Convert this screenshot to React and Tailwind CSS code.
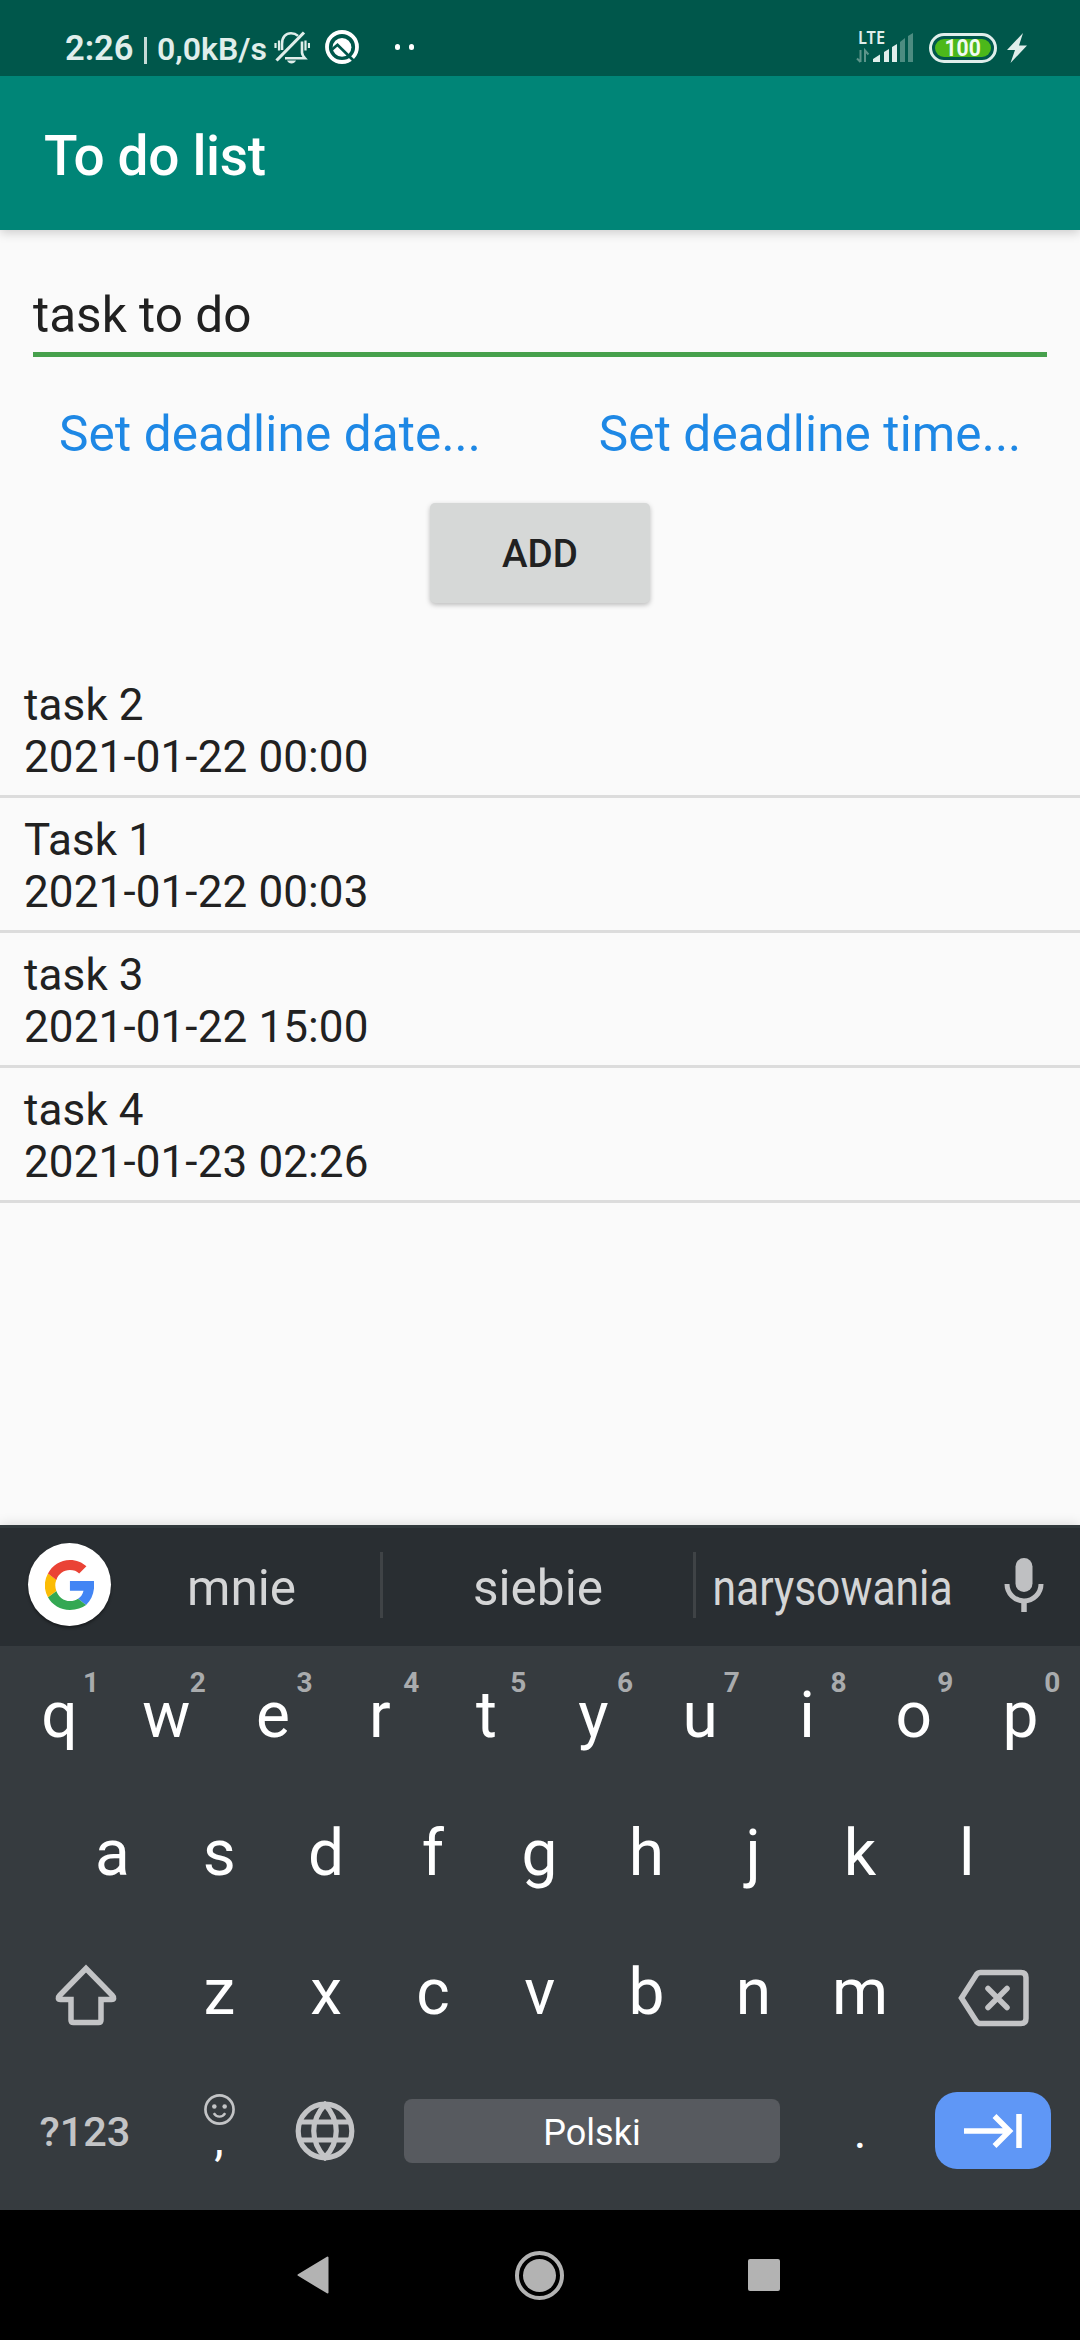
const tasks = [
  { name: 'task 2', due: '2021-01-22 00:00' },
  { name: 'Task 1', due: '2021-01-22 00:03' },
  { name: 'task 3', due: '2021-01-22 15:00' },
  { name: 'task 4', due: '2021-01-23 02:26' },
];

const BellOffIcon = () => (
  <svg className="h-[34px] w-[36px] shrink-0" viewBox="0 0 36 34" fill="none" stroke="#e0eeeb" strokeWidth="2.6">
    <path d="M8 20V14C8 6.500 12 3.300 17 3.300c3 0 5 .8 7 2.600M28 11.500v11c0 2 1 3.500 3 5.800H11" />
    <path d="M2.500 30.500 30 2.500" strokeWidth="3.200" />
    <path d="M5 10.500v10M1.500 13v5M31.500 10.500v10M35 13v5" strokeWidth="2.200" />
    <path d="M13 30.500h9c-1 2-2.500 3-4.500 3s-3.500-1-4.500-3Z" fill="#e0eeeb" stroke="none" />
  </svg>
);

const QIcon = () => (
  <svg className="h-[34px] w-[34px] shrink-0" viewBox="0 0 34 34" fill="none">
    <circle cx="17" cy="17" r="15" stroke="#fff" strokeWidth="3.800" />
    <circle cx="17" cy="17.300" r="9.400" fill="#fff" />
    <path d="M7 19.500 12.500 14.800 29 31" stroke="#00574b" strokeWidth="2.800" />
  </svg>
);

const SignalIcon = () => (
  <svg className="h-[34px] w-[60px] shrink-0 overflow-visible" viewBox="0 0 60 34">
    <text x="2" y="13.500" fontSize="17" fontWeight="600" fontFamily="'Noto Sans', sans-serif" fill="#e0eeeb" textLength="27" lengthAdjust="spacingAndGlyphs">LTE</text>
    <path d="M4.500 20v12M1 28.500l3.500 3.500M9 32V20.500l3.500 4" stroke="#5c948a" strokeWidth="2" fill="none" />
    <path d="M17 31.500V29l7-4.500V32h-7ZM28 22l5-3v13h-5ZM36 17l5-3v18h-5Z" fill="#e0eeeb" />
    <path d="M44 12l5-4v24h-5ZM52 6l5-3v29h-5Z" fill="#4d8c81" />
  </svg>
);

const BoltIcon = () => (
  <svg className="h-[30px] w-[20px] shrink-0" viewBox="0 0 20 30" fill="#e0eeeb">
    <path d="M16 0 0 17h8L3.500 30 20 12.500h-8L16 0Z" />
  </svg>
);

const GoogleG = () => (
  <svg className="h-[50px] w-[49px]" viewBox="3.600 2.700 16.900 17.300">
    <path fill="#4285f4" d="M20.500 10H12.200v3.300h4.700c-.3 1.200-.9 2.200-1.900 2.800l2.800 2.200c1.800-1.700 2.800-4.200 2.800-7 0-.5 0-.9-.1-1.300Z" />
    <path fill="#34a853" d="M12.200 20c2.300 0 4.200-.7 5.600-1.700L15 16.100c-.8.500-1.700.8-2.800.8-2.200 0-4-1.500-4.700-3.500l-2.900 2.200C6 18.200 8.900 20 12.200 20Z" />
    <path fill="#fbbc05" d="M7.500 13.400a5.500 5.500 0 0 1 0-3.900L4.600 7.400a8.700 8.700 0 0 0 0 8.200l2.900-2.200Z" />
    <path fill="#ea4335" d="M12.200 6.200c1.300 0 2.400.4 3.200 1.200l2.500-2.500c-1.500-1.400-3.400-2.200-5.700-2.200-3.300 0-6.200 1.900-7.600 4.700l2.900 2.200c.7-2 2.500-3.400 4.700-3.400Z" />
  </svg>
);

const MicIcon = () => (
  <svg className="h-[54px] w-[40px]" viewBox="0 0 40 54" fill="none">
    <rect x="11.500" y="0" width="17" height="34" rx="8.500" fill="#bfc0c2" />
    <path d="M3 26a17 17 0 0 0 34 0" stroke="#bfc0c2" strokeWidth="5" />
    <path d="M20 42v12" stroke="#bfc0c2" strokeWidth="5.500" />
  </svg>
);

const ShiftIcon = () => (
  <svg className="h-[62px] w-[62px]" viewBox="0 0 62 62" fill="none" stroke="#c3c4c6" strokeWidth="5.500">
    <path d="M31 4.500 4.600 31.500C2.500 33.600 3 35.500 5.500 35.500H16V56q0 2.500 2.500 2.500h25q2.500 0 2.500-2.500V35.500h10.500c2.500 0 3-1.900.9-4L31 4.500Z" />
  </svg>
);

const BackspaceIcon = () => (
  <svg className="h-[58px] w-[72px]" viewBox="0 0 72 58" fill="none" stroke="#c3c4c6" strokeWidth="5.500">
    <path d="M3.500 29 18.500 5.500Q20 3.500 22.500 3.500H63q5 0 5 5v41q0 5-5 5H22.500q-2.500 0-4-2L3.500 29Z" />
    <path d="M30 19.500 49 38.500M49 19.500 30 38.500" strokeLinecap="round" />
  </svg>
);

const SmileyIcon = () => (
  <svg className="h-[31px] w-[31px] shrink-0" viewBox="0 0 30 30" fill="none" stroke="#c3c4c6">
    <circle cx="15" cy="15" r="13.600" strokeWidth="2.600" />
    <circle cx="10" cy="12" r="2.200" fill="#c3c4c6" stroke="none" />
    <circle cx="20" cy="12" r="2.200" fill="#c3c4c6" stroke="none" />
    <path d="M9.500 18.500c2.500 4.500 8.500 4.500 11 0" strokeWidth="2.300" />
  </svg>
);

const GlobeIcon = () => (
  <svg className="h-[60px] w-[60px]" viewBox="0 0 60 60" fill="none" stroke="#c3c4c6" strokeWidth="5.200">
    <circle cx="30" cy="30" r="26.800" />
    <path d="M30 3.500C15 20 15 40 30 56.500C45 40 45 20 30 3.500ZM5 21h50M5 39h50" />
  </svg>
);

const TabIcon = () => (
  <svg className="h-[36px] w-[60px]" viewBox="0 0 60 36" fill="none" stroke="#fff" strokeWidth="5.500">
    <path d="M1 18h46M31.500 3 46.500 18l-15 15M56 1v34" />
  </svg>
);

const Key = ({ children, hint }) => (
  <div className="relative flex w-[106.800px] justify-center text-[64px] leading-[64px] text-white">
    {children}
    {hint && (
      <span className="absolute top-[-15px] left-[76px] w-[18px] text-center text-[28px] leading-[28px] font-bold text-[#a9abad]">{hint}</span>
    )}
  </div>
);

export default function App() {
  return (
    <div className="flex h-[2340px] w-[1080px] flex-col overflow-hidden bg-[#fafafa] font-['Roboto',sans-serif] text-[#212121]">
      <header className="relative z-10 shrink-0 bg-[#008577] shadow-[0_3px_10px_rgba(0,0,0,0.18)]">
        <div className="flex h-[76px] justify-between bg-[#00574b] pt-[30px] text-[#e0eeeb]">
          <div className="flex h-[34px] pl-[65px] font-semibold">
            <span className="w-[79px] text-[34.500px] leading-[37px] whitespace-nowrap">2:26</span>
            <span className="mt-[7px] h-[27px] w-[3px] bg-[#c5dbd7]" />
            <span className="ml-[10px] w-[117px] text-[32px] leading-[38px] whitespace-nowrap">0,0kB/s</span>
            <BellOffIcon />
            <div className="ml-[15px]"><QIcon /></div>
            <div className="ml-[36px] flex gap-[9px] pt-[14px]">
              <span className="h-[6px] w-[5px] rounded-full bg-white" />
              <span className="h-[6px] w-[5px] rounded-full bg-white" />
            </div>
          </div>
          <div className="flex h-[34px] pr-[53px]">
            <SignalIcon />
            <div className="mt-[3px] ml-[13px] h-[30px] w-[68px] rounded-full border-[3px] border-[#e0eeeb] p-[3px]">
              <div className="flex h-full items-center justify-center rounded-full bg-[#4cb81a] text-[24px] leading-[18px] font-bold text-[#f0faf0]"><span className="scale-x-[0.880]">100</span></div>
            </div>
            <div className="mt-[3px] ml-[10px]"><BoltIcon /></div>
          </div>
        </div>
        <div className="flex h-[154px] items-center pl-[44px]">
          <h1 className="pt-[5px] text-[55px] leading-[64px] font-medium tracking-[-0.350px] text-white">To do list</h1>
        </div>
      </header>

      <main className="flex flex-1 flex-col">
        <div className="mx-[33px] mt-[46px] h-[81px] border-b-[5px] border-[#46a04c]">
          <div className="pt-[10px] text-[49.500px] leading-[58px]">task to do</div>
        </div>
        <div className="mt-[48px] flex h-[58px] text-center text-[49.500px] leading-[58px] tracking-[0.120px] text-[#1e88e5]">
          <div className="w-1/2">Set deadline date...</div>
          <div className="w-1/2">Set deadline time...</div>
        </div>
        <button className="mt-[40px] h-[100px] w-[220px] self-center rounded-[5px] bg-[#d6d8d7] pt-px text-[38.500px] leading-[45px] font-medium shadow-[0_2px_5px_rgba(0,0,0,0.25)]">ADD</button>
        <ul className="mt-[60px]">
          {tasks.map((t) => (
            <li key={t.name} className="h-[135px] border-b-[3px] border-[#dcdcdc] pt-[16px] pl-[24px] text-[44px] leading-[52px] tracking-[0.120px]">
              <div>{t.name}</div>
              <div>{t.due}</div>
            </li>
          ))}
        </ul>
      </main>

      <section className="h-[685px] shrink-0 bg-[#363b3f] shadow-[0_0_12px_rgba(0,0,0,0.15)]">
        <div className="flex h-[121px] items-center border-t-[3px] border-[#31393c] bg-[#292e32] pl-[28px] pb-[4px] text-[49.500px] leading-[58px] text-[#d4d5d6]">
          <div className="mb-px flex h-[83px] w-[83px] items-center justify-center rounded-full bg-white shadow-[0_2px_3px_rgba(0,0,0,0.4)]"><GoogleG /></div>
          <div className="w-[269px] pt-[5px] pr-[8px] text-center"><span>mnie</span></div>
          <span className="h-[66px] w-[3px] bg-[#3f4346]" />
          <div className="w-[310px] pt-[5px] text-center">siebie</div>
          <span className="h-[66px] w-[3px] bg-[#3f4346]" />
          <div className="flex w-[273px] justify-center pt-[5px]"><span className="scale-x-[0.860]">narysowania</span></div>
          <div className="ml-[35px]"><MicIcon /></div>
        </div>
        <div className="flex h-[138px] items-center pt-[2px] pl-[6px]">
          {[...'qwertyuiop'].map((c, i) => <Key key={c} hint={String((i + 1) % 10)}>{c}</Key>)}
        </div>
        <div className="flex h-[138px] items-center pt-[2px] pl-[59px]">
          {[...'asdfghjkl'].map((c) => <Key key={c}>{c}</Key>)}
        </div>
        <div className="flex h-[139px] items-center pt-[2px]">
          <div className="flex w-[166px] justify-center pt-[4px] pl-[6px]"><ShiftIcon /></div>
          {[...'zxcvbnm'].map((c) => <Key key={c}>{c}</Key>)}
          <div className="ml-[44px] pt-[10px]"><BackspaceIcon /></div>
        </div>
        <div className="flex h-[139px] items-center">
          <div className="w-[170px] pt-[2px] text-center text-[41.500px] leading-[48px] font-medium text-[#c3c4c6]">?123</div>
          <div className="flex h-[74px] w-[98px] flex-col items-center">
            <SmileyIcon />
            <span className="-mt-[5px] text-[48px] leading-[38px] text-white">,</span>
          </div>
          <div className="flex w-[113px] justify-center"><GlobeIcon /></div>
          <div className="ml-[23px] h-[64px] w-[376px] rounded-[8px] bg-[#575a5f] text-center text-[36px] leading-[68px] text-white">Polski</div>
          <div className="w-[155px] pt-[3px] pl-[5px] text-center text-[48px] leading-[38px] text-white">.</div>
          <div className="flex h-[77px] w-[116px] items-center justify-center rounded-[22px] bg-[#5f97f6]"><TabIcon /></div>
        </div>
      </section>

      <nav className="flex h-[130px] shrink-0 items-center bg-black pl-[297px]">
        <svg className="h-[38px] w-[32px]" viewBox="0 0 32 38" fill="#b3b3b3" stroke="#b3b3b3" strokeWidth="2" strokeLinejoin="round"><path d="M1.500 19 30.500 1.500v35Z" /></svg>
        <div className="ml-[186px] flex h-[49px] w-[49px] items-center justify-center rounded-full border-4 border-[#b3b3b3]">
          <div className="h-[33px] w-[33px] rounded-full bg-[#b3b3b3]" />
        </div>
        <div className="ml-[184px] h-[32px] w-[32px] rounded-[2px] bg-[#b3b3b3]" />
      </nav>
    </div>
  );
}
